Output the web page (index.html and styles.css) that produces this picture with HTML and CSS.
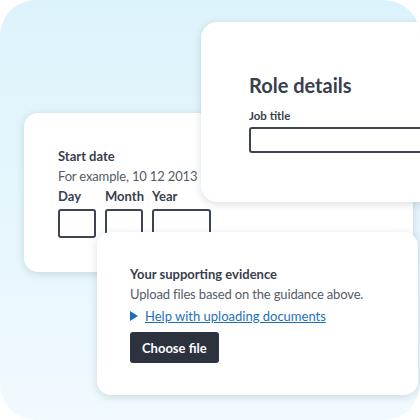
FILE: index.html
```html
<!DOCTYPE html>
<html lang="en">
<head>
    <meta charset="UTF-8">
    <meta name="viewport" content="width=device-width, initial-scale=1.0">
    <title>Form pages</title>
    <link rel="stylesheet" href="styles.css">
</head>
<body>
    <div class="fondo">
        <!-- Tarjeta de fecha -->
        <div class="tarjeta tarjeta-fecha">
            <p class="etiqueta">Start date</p>
            <p class="pista">For example, 10 12 2013</p>
            <div class="fecha">
                <span class="etiqueta">Day</span>
                <span class="etiqueta">Month</span>
                <span class="etiqueta">Year</span>
                <div class="caja"></div>
                <div class="caja"></div>
                <div class="caja"></div>
            </div>
        </div>

        <!-- Tarjeta del puesto -->
        <div class="tarjeta tarjeta-puesto">
            <h2>Role details</h2>
            <p class="etiqueta etiqueta-chica">Job title</p>
            <div class="caja caja-texto"></div>
        </div>

        <!-- Tarjeta de archivos -->
        <div class="tarjeta tarjeta-archivos">
            <p class="etiqueta">Your supporting evidence</p>
            <p class="pista">Upload files based on the guidance above.</p>
            <p class="detalle"><span class="flecha"></span><a href="#">Help with uploading documents</a></p>
            <button class="boton-archivo">Choose file</button>
        </div>
    </div>
</body>
</html>
```

FILE: styles.css
```css
body {
    margin: 0;
    font-family: Lato, "Noto Sans", sans-serif;
    color: #383f4b;
    background-color: white;
}

p {
    margin: 0;
}

.fondo {
    position: relative;
    width: 420px;
    height: 420px;
    border-radius: 36px;
    background: linear-gradient(180deg, #ddf3fc 0%, #e8f7fd 60%, #f1fafe 100%);
    overflow: hidden;
}

.tarjeta {
    position: absolute;
    background-color: white;
    border-radius: 14px;
    box-shadow: 0 2px 8px rgba(40, 70, 90, 0.18);
    box-sizing: border-box;
}

.etiqueta {
    font-size: 13px;
    font-weight: bold;
    line-height: 20px;
    white-space: nowrap;
}

.pista {
    font-size: 13px;
    letter-spacing: -0.15px;
    line-height: 20px;
    color: #555c66;
}

/* Fecha */
.tarjeta-fecha {
    left: 24px;
    top: 113px;
    width: 389px;
    height: 159px;
    padding: 33px 0 0 34px;
}

.fecha {
    display: grid;
    grid-template-columns: 38px 38px 59px;
    column-gap: 9px;
    row-gap: 3px;
}

.caja {
    height: 29px;
    border: 2px solid #3d4450;
    border-radius: 3px;
    box-sizing: border-box;
}

/* Puesto */
.tarjeta-puesto {
    left: 201px;
    top: 22px;
    width: 260px;
    height: 180px;
    border-radius: 16px;
    padding: 49px 0 0 48px;
}

.tarjeta-puesto h2 {
    margin: 0;
    font-size: 20px;
    line-height: 28px;
    font-weight: bold;
}

.etiqueta-chica {
    font-size: 11.5px;
    margin-top: 9px;
    line-height: 16px;
}

.caja-texto {
    margin-top: 3px;
    width: 200px;
    height: 26px;
}

/* Archivos */
.tarjeta-archivos {
    left: 97px;
    top: 232px;
    width: 321px;
    height: 163px;
    padding: 32px 0 0 33px;
}

.detalle {
    margin-top: 2px;
    font-size: 13px;
    line-height: 20px;
    display: flex;
    align-items: center;
    gap: 7px;
}

.detalle a {
    color: #1d70b8;
}

.flecha {
    width: 0;
    height: 0;
    border-top: 5px solid transparent;
    border-bottom: 5px solid transparent;
    border-left: 8px solid #1d70b8;
}

.boton-archivo {
    margin-top: 6px;
    padding: 0 12px;
    height: 31px;
    background-color: #2c323e;
    color: white;
    font-family: inherit;
    font-size: 13px;
    font-weight: bold;
    border: none;
    border-radius: 3px;
}
```
